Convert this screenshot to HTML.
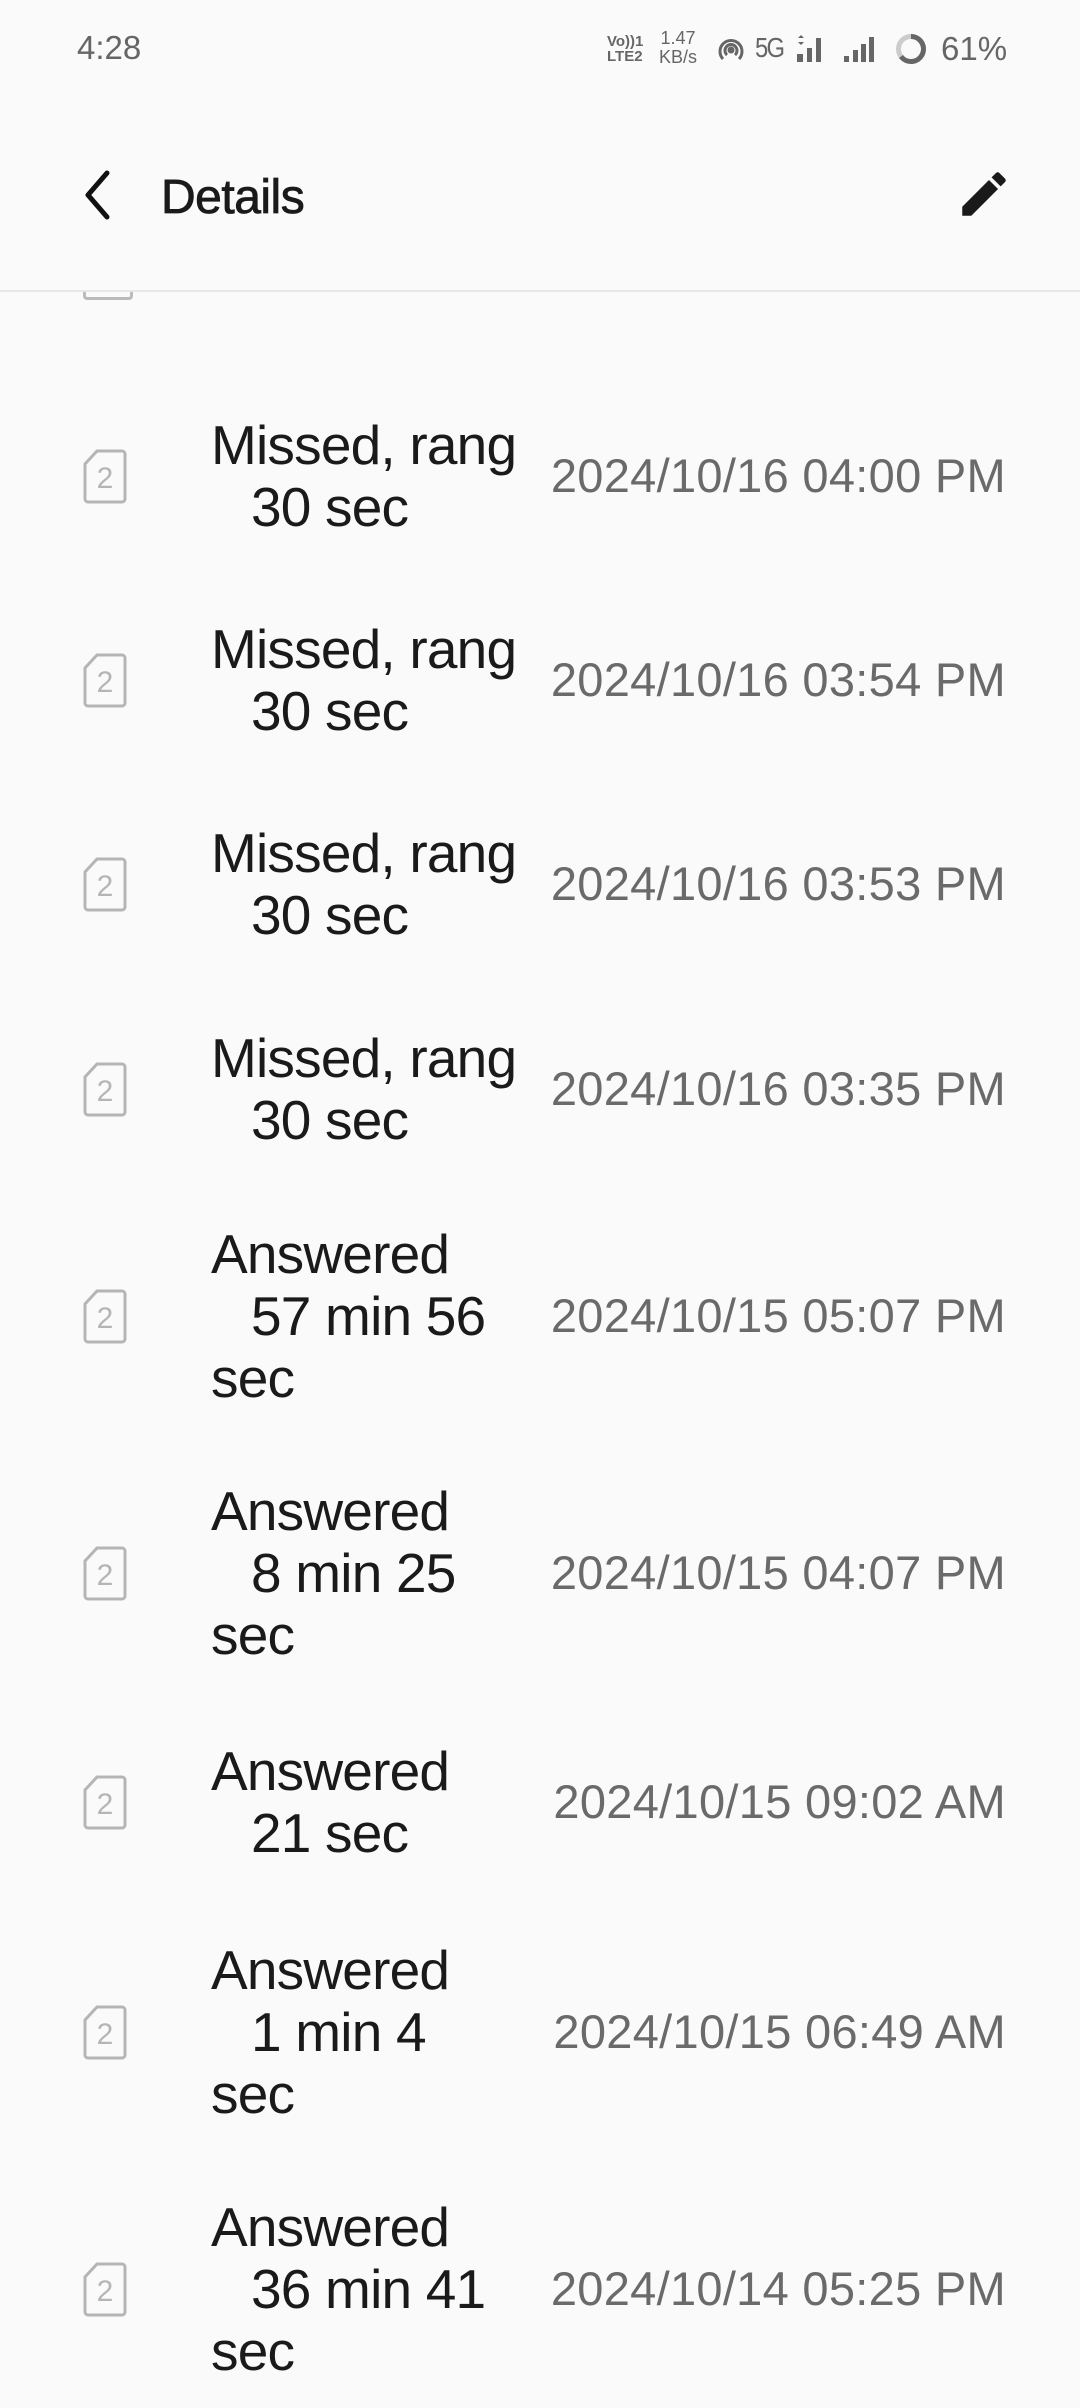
<!DOCTYPE html>
<html><head><meta charset="utf-8"><style>
body{margin:0;width:1080px;height:2408px;background:#fafafa;font-family:"Liberation Sans",sans-serif;position:relative;overflow:hidden}
.a{position:absolute;white-space:pre}
.t{font-size:55px;color:#1a1a1a;line-height:62px;left:211px;letter-spacing:-0.8px}
.d{font-size:47px;color:#6a6a6a;line-height:62px;right:74px;letter-spacing:0.3px}
.sim{position:absolute;left:83px;width:44px;height:55px}
.sb{color:#666;font-size:30px}
</style></head><body>
<div class="a sb" style="left:77px;top:29px;font-size:33px">4:28</div>
<div class="a" style="left:607px;top:34px;font-size:15px;line-height:15px;color:#666;font-weight:bold">Vo))1<br>LTE2</div>
<div class="a" style="left:659px;top:29px;font-size:18px;line-height:19px;color:#666;text-align:center">1.47<br>KB/s</div>
<svg class="a" style="left:716px;top:35px" width="30" height="30" viewBox="0 0 30 30" fill="none" stroke="#666" stroke-width="3"><path d="M7 24A11 11 0 1 1 23 24"/><path d="M11 20A6 6 0 1 1 19 20"/><circle cx="15" cy="15" r="2" fill="#666"/></svg>
<div class="a sb" style="left:755px;top:32px;font-size:28px;letter-spacing:-2px;transform:scaleX(0.85);transform-origin:left">5G</div>
<svg class="a" style="left:795px;top:34px" width="32" height="30"><path d="M3 4l3-3 3 3zM3 8l3 3 3-3z" fill="#666"/><rect x="2" y="20" width="6" height="8" fill="#666"/><rect x="12" y="14" width="5" height="14" fill="#666"/><rect x="21" y="4" width="5" height="24" fill="#666"/></svg>
<svg class="a" style="left:843px;top:34px" width="32" height="30"><rect x="1" y="22" width="5" height="6" fill="#666"/><rect x="10" y="16" width="5" height="12" fill="#666"/><rect x="18" y="10" width="5" height="18" fill="#666"/><rect x="26" y="3" width="5" height="25" fill="#666"/></svg>
<svg class="a" style="left:895px;top:33px" width="32" height="32"><circle cx="16" cy="16" r="12.5" fill="none" stroke="#ccc" stroke-width="5"/><path d="M16 3.5A12.5 12.5 0 1 1 6 23.5" fill="none" stroke="#666" stroke-width="5"/></svg>
<div class="a sb" style="left:941px;top:30px;font-size:33px">61%</div>
<svg class="a" style="left:80px;top:170px" width="34" height="50"><path d="M27 3L8 25L27 47" fill="none" stroke="#111" stroke-width="5" stroke-linecap="round" stroke-linejoin="round"/></svg>
<div class="a" style="left:161px;top:170px;font-size:48px;color:#1a1a1a;letter-spacing:-0.5px;-webkit-text-stroke:0.8px #1a1a1a">Details</div>
<svg class="a" style="left:955px;top:165px" width="58" height="58" viewBox="0 0 24 24"><path d="M3 17.25V21h3.75L17.81 9.94l-3.75-3.75L3 17.25zM20.71 7.04a1 1 0 0 0 0-1.41l-2.34-2.34a1 1 0 0 0-1.41 0l-1.83 1.83 3.75 3.75 1.83-1.83z" fill="#1a1a1a"/></svg>
<div class="a" style="left:0;top:290px;width:1080px;height:2px;background:#e8e8e8"></div>
<div class="a" style="left:83px;top:292px;width:44px;height:5px;border:3px solid #bbb;border-top:none;border-radius:0 0 4px 4px"></div>
<div id="rows"></div>
<script>
var R=[[476,["Missed, rang","  30 sec"],"2024/10/16 04:00 PM"],[680,["Missed, rang","  30 sec"],"2024/10/16 03:54 PM"],[884,["Missed, rang","  30 sec"],"2024/10/16 03:53 PM"],[1089,["Missed, rang","  30 sec"],"2024/10/16 03:35 PM"],[1316,["Answered","  57 min 56","sec"],"2024/10/15 05:07 PM"],[1573,["Answered","  8 min 25","sec"],"2024/10/15 04:07 PM"],[1802,["Answered","  21 sec"],"2024/10/15 09:02 AM"],[2032,["Answered","  1 min 4","sec"],"2024/10/15 06:49 AM"],[2289,["Answered","  36 min 41","sec"],"2024/10/14 05:25 PM"]];
var h="";
R.forEach(function(r){var c=r[0],L=r[1];var s=L.length==2?c-62:c-93;
L.forEach(function(t,i){h+='<div class="a t" style="top:'+(s+i*62)+'px">'+t.replace(/^  /,'<span style="display:inline-block;width:40px"></span>')+'</div>';});
h+='<div class="a d" style="top:'+(c-31)+'px">'+r[2]+'</div>';
h+='<svg class="sim" style="top:'+(c-27)+'px" viewBox="0 0 44 55"><path d="M14 2H39A3 3 0 0 1 42 5V50A3 3 0 0 1 39 53H5A3 3 0 0 1 2 50V15Z" fill="none" stroke="#b5b5b5" stroke-width="3"/><text x="22" y="39" font-size="30" fill="#b5b5b5" text-anchor="middle" font-family="Liberation Sans">2</text></svg>';});
document.getElementById("rows").innerHTML=h;
</script>
</body></html>
